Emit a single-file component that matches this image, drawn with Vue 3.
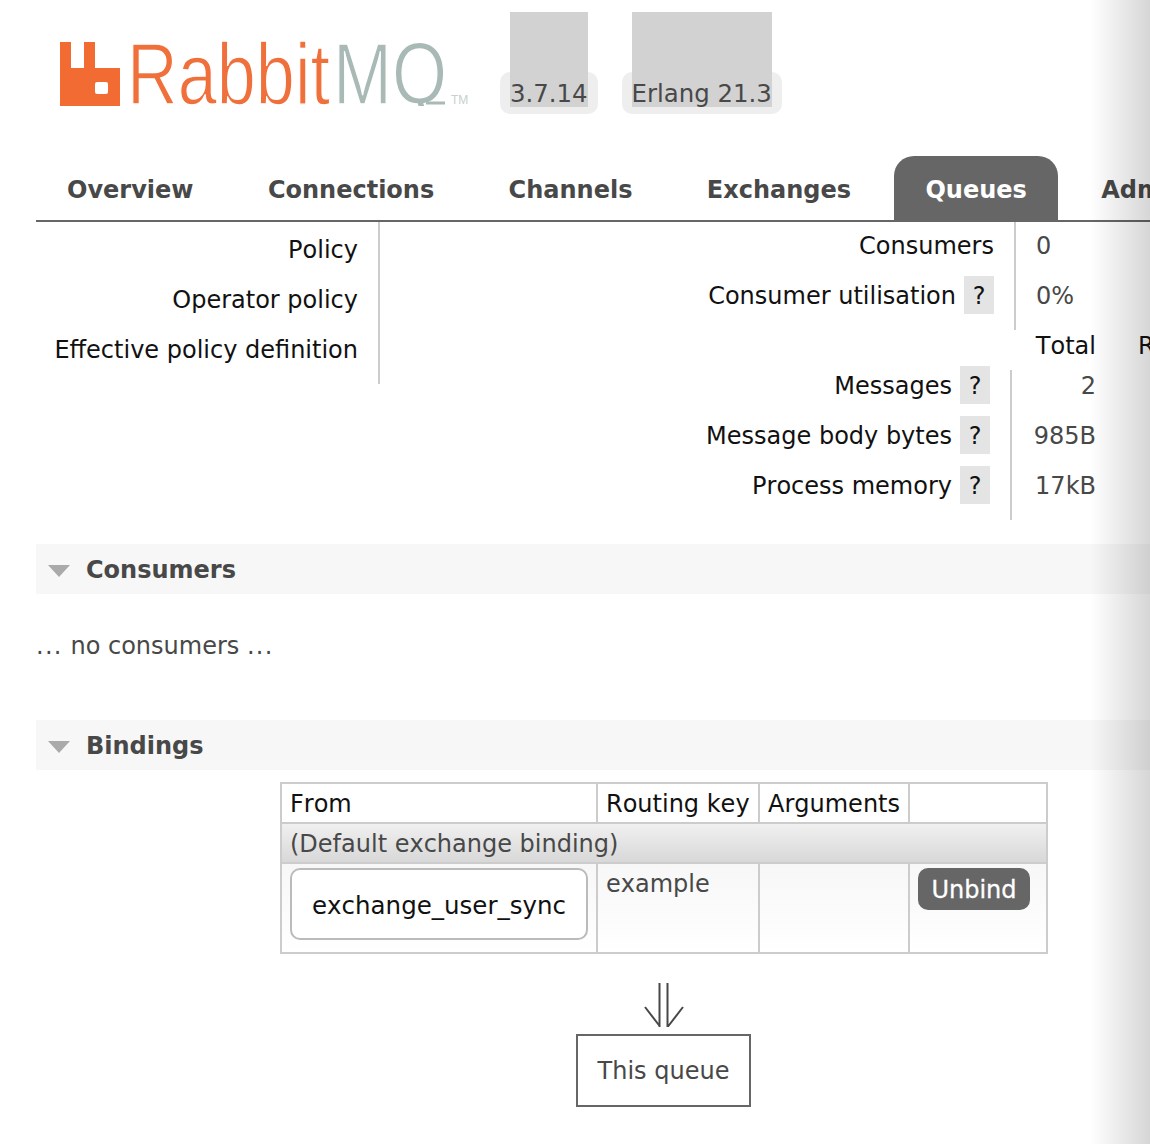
<script setup>
const tabs = [
  { name: 'Overview' },
  { name: 'Connections' },
  { name: 'Channels' },
  { name: 'Exchanges' },
  { name: 'Queues', active: true },
  { name: 'Admin' }
]

const policyRows = ['Policy', 'Operator policy', 'Effective policy definition']
const consumerRows = [
  { label: 'Consumers', value: '0' },
  { label: 'Consumer utilisation', value: '0%', help: true }
]
const messageRows = [
  { label: 'Messages', value: '2' },
  { label: 'Message body bytes', value: '985B' },
  { label: 'Process memory', value: '17kB' }
]
</script>

<template>
  <div class="page">
    <header class="head">
      <svg class="logo" width="430" height="80" viewBox="0 0 430 80">
        <defs>
          <clipPath id="logo-baseline"><rect x="60" y="0" width="340" height="66" /></clipPath>
        </defs>
        <path d="M0 2H11V28H24V2H35V28H60V66H0Z" fill="#f26b32" />
        <rect x="35" y="42" width="13" height="12" rx="2" fill="#fff" />
        <g clip-path="url(#logo-baseline)">
          <text x="67" y="64" class="logo-word" fill="#f0703c" textLength="203" lengthAdjust="spacingAndGlyphs">Rabbit</text>
          <text x="273" y="64" class="logo-word" fill="#a9b9b5" textLength="114" lengthAdjust="spacingAndGlyphs">MQ</text>
        </g>
        <path d="M366 63H385" stroke="#a9b9b5" stroke-width="3" />
        <text x="391" y="64" class="logo-tm" fill="#c8d0ce">TM</text>
      </svg>
      <div class="versions">
        <span class="version"><i class="blot"></i><b>3.7.14</b></span>
        <span class="version"><i class="blot"></i><b>Erlang 21.3</b></span>
      </div>
    </header>

    <nav class="tabs">
      <a v-for="tab in tabs" :key="tab.name" class="tab" :class="{ active: tab.active }">{{ tab.name }}</a>
    </nav>

    <div class="stats">
      <div class="policies">
        <div v-for="row in policyRows" :key="row" class="policy-row">{{ row }}</div>
      </div>
      <div class="figures">
        <div class="consumer-group">
          <div class="labels">
            <div v-for="row in consumerRows" :key="row.label" class="label-row">
              {{ row.label }}<span v-if="row.help" class="help">?</span>
            </div>
          </div>
          <div class="consumer-values">
            <div v-for="row in consumerRows" :key="row.label" class="value-row">{{ row.value }}</div>
          </div>
        </div>
        <div class="totals"><span class="total">Total</span><span class="ready">Ready</span></div>
        <div class="message-group">
          <div class="labels">
            <div v-for="row in messageRows" :key="row.label" class="msg-row">
              {{ row.label }}<span class="help">?</span>
            </div>
          </div>
          <div class="message-values">
            <div class="message-inner">
              <div v-for="row in messageRows" :key="row.label" class="msg-value">{{ row.value }}</div>
            </div>
          </div>
        </div>
      </div>
    </div>

    <section class="section consumers">
      <h2 class="section-title"><span class="arrow"></span>Consumers</h2>
      <p class="empty"><span class="dots">...</span> no consumers <span class="dots">...</span></p>
    </section>

    <section class="section bindings">
      <h2 class="section-title"><span class="arrow"></span>Bindings</h2>
      <table class="binding-table">
        <thead>
          <tr>
            <th class="col-from">From</th>
            <th class="col-key">Routing key</th>
            <th class="col-args">Arguments</th>
            <th class="col-act"></th>
          </tr>
        </thead>
        <tbody>
          <tr class="group-row"><td colspan="4">(Default exchange binding)</td></tr>
          <tr class="data-row">
            <td class="from-cell"><div class="exchange-box">exchange_user_sync</div></td>
            <td>example</td>
            <td></td>
            <td class="act-cell"><button class="unbind">Unbind</button></td>
          </tr>
        </tbody>
      </table>
      <div class="flow">
        <svg class="flow-arrow" width="40" height="46" viewBox="0 0 40 46">
          <path d="M15.5 1V45M23.5 1V45M1 25L16 44.5M39 25L24 44.5" fill="none" stroke="#484848" stroke-width="2" />
        </svg>
        <div class="this-queue">This queue</div>
      </div>
    </section>

    <div class="edge-shade"></div>
  </div>
</template>

<style scoped>
.page {
  position: relative;
  width: 1150px;
  height: 1144px;
  overflow: hidden;
  background: #fff;
  font-family: "DejaVu Sans", Verdana, sans-serif;
  font-size: 24px;
  font-kerning: none;
  color: #484848;
}

.head {
  display: flex;
  height: 156px;
}

.logo {
  margin: 40px 0 0 60px;
  flex: none;
}

.logo-word {
  font-family: "Liberation Sans", sans-serif;
  font-size: 88px;
  stroke: #fff;
  stroke-width: 1.4px;
}

.logo-tm {
  font-family: "Liberation Sans", sans-serif;
  font-size: 12px;
}

.versions {
  display: flex;
  gap: 24px;
  margin-left: 10px;
  padding-top: 72px;
  align-items: flex-start;
}

.version {
  position: relative;
  display: block;
  height: 42px;
  line-height: 44px;
  padding: 0 10px;
  border-radius: 10px;
  background: #eee;
  white-space: nowrap;
  font-size: 24.4px;
}

.version b {
  position: relative;
  font-weight: 400;
}

.blot {
  position: absolute;
  left: 10px;
  right: 10px;
  top: -60px;
  bottom: 7px;
  background: #d2d2d2;
}

.tabs {
  display: flex;
  gap: 12.4px;
  height: 64px;
  margin-left: 36px;
  border-bottom: 2px solid #666;
}

.tab {
  height: 64px;
  padding: 0 31px;
  line-height: 68px;
  font-weight: 700;
  color: #484848;
  border-radius: 20px 20px 0 0;
  white-space: nowrap;
}

.tab.active {
  background: #666;
  color: #fff;
}

.stats {
  display: flex;
  height: 322px;
  color: #111;
}

.policies {
  width: 344px;
  height: 162px;
  margin-left: 36px;
  box-sizing: border-box;
  padding-top: 3px;
  flex: none;
  border-right: 2px solid #ccc;
}

.policy-row {
  height: 50px;
  line-height: 50px;
  padding-right: 20px;
  text-align: right;
  white-space: nowrap;
}

.figures {
  flex: none;
  width: 770px;
}

.consumer-group {
  display: flex;
  height: 108px;
}

.consumer-group .labels {
  width: 636px;
  border-right: 2px solid #ccc;
  padding-right: 20px;
  box-sizing: border-box;
  flex: none;
}

.label-row {
  display: flex;
  justify-content: flex-end;
  align-items: center;
  box-sizing: border-box;
  height: 46px;
  padding-top: 2px;
  margin-bottom: 4px;
  white-space: nowrap;
}

.consumer-values {
  padding-left: 20px;
  color: #484848;
}

.value-row {
  height: 46px;
  line-height: 48px;
  margin-bottom: 4px;
}

.help {
  width: 30px;
  height: 38px;
  line-height: 40px;
  margin: -2px 0 0 8px;
  text-align: center;
  background: #e4e4e4;
  color: #111;
  flex: none;
}

.totals {
  display: flex;
  height: 30px;
  line-height: 32px;
  white-space: nowrap;
}

.total {
  width: 716px;
  text-align: right;
  flex: none;
}

.ready {
  margin-left: 42px;
}

.message-group {
  display: flex;
}

.message-group .labels {
  width: 630px;
  padding-right: 20px;
  box-sizing: border-box;
  flex: none;
}

.msg-row {
  display: flex;
  justify-content: flex-end;
  align-items: center;
  box-sizing: border-box;
  height: 50px;
  padding-top: 2px;
  white-space: nowrap;
}

.message-values {
  width: 85px;
  height: 150px;
  margin-top: 10px;
  border-left: 2px solid #ccc;
  color: #484848;
  flex: none;
}

.message-inner {
  margin-top: -10px;
  padding-right: 1px;
  text-align: right;
}

.msg-value {
  height: 50px;
  line-height: 52px;
}

.section {
  margin-left: 36px;
}

.section-title {
  display: flex;
  align-items: center;
  box-sizing: border-box;
  height: 50px;
  margin: 0;
  padding-top: 2px;
  background: #f7f7f7;
  font-size: 24px;
  font-weight: 700;
  color: #484848;
}

.arrow {
  width: 0;
  height: 0;
  margin: 2px 16px 0 12px;
  border-left: 11px solid transparent;
  border-right: 11px solid transparent;
  border-top: 12px solid #aaa;
}

.consumers {
  height: 176px;
}

.empty {
  margin: 0;
  padding-top: 36px;
  height: 34px;
  line-height: 32px;
}

.dots {
  letter-spacing: 1.3px;
}

.binding-table {
  margin: 12px 0 0 244px;
  border-collapse: collapse;
  table-layout: fixed;
  width: 768px;
  border: 2px solid #ccc;
}

.binding-table th,
.binding-table td {
  border: 2px solid #ccc;
  padding: 0 8px;
  text-align: left;
  font-weight: 400;
  white-space: nowrap;
  vertical-align: top;
}

.binding-table th {
  height: 36px;
  padding-top: 2px;
  line-height: 36px;
  color: #111;
}

.col-from { width: 298px; }
.col-key { width: 144px; }
.col-args { width: 132px; }

.group-row td {
  height: 36px;
  padding-top: 2px;
  line-height: 36px;
  background: linear-gradient(#f0f0f0, #d8d8d8);
}

.data-row td {
  height: 88px;
  line-height: 40px;
  background: linear-gradient(#f7f7f7, #fff);
}

.binding-table td.from-cell {
  height: 80px;
  padding: 4px 8px;
}

.exchange-box {
  height: 72px;
  line-height: 72px;
  box-sizing: border-box;
  border: 2px solid #bbb;
  border-radius: 10px;
  background: #fff;
  color: #111;
  text-align: center;
  font-size: 24.5px;
}

.binding-table td.act-cell {
  height: 80px;
  padding: 4px 8px;
}

.unbind {
  display: block;
  width: 112px;
  height: 42px;
  padding: 2px 0 0;
  border: 0;
  border-radius: 10px;
  background: #666;
  color: #fff;
  font: 24px "DejaVu Sans", Verdana, sans-serif;
  -webkit-text-stroke: 0.3px #fff;
}

.flow {
  display: flex;
  flex-direction: column;
  align-items: center;
  width: 175px;
  margin: 28px 0 0 540px;
}

.flow-arrow {
  display: block;
  margin-bottom: 6px;
}

.this-queue {
  box-sizing: border-box;
  width: 175px;
  height: 73px;
  line-height: 71px;
  border: 2px solid #666;
  text-align: center;
}

.edge-shade {
  position: absolute;
  top: 0;
  right: 0;
  bottom: 0;
  width: 60px;
  background: linear-gradient(to right, rgba(0, 0, 0, 0), rgba(0, 0, 0, 0.16));
  pointer-events: none;
}
</style>

<style>
body {
  margin: 0;
  overflow: hidden;
}
</style>
